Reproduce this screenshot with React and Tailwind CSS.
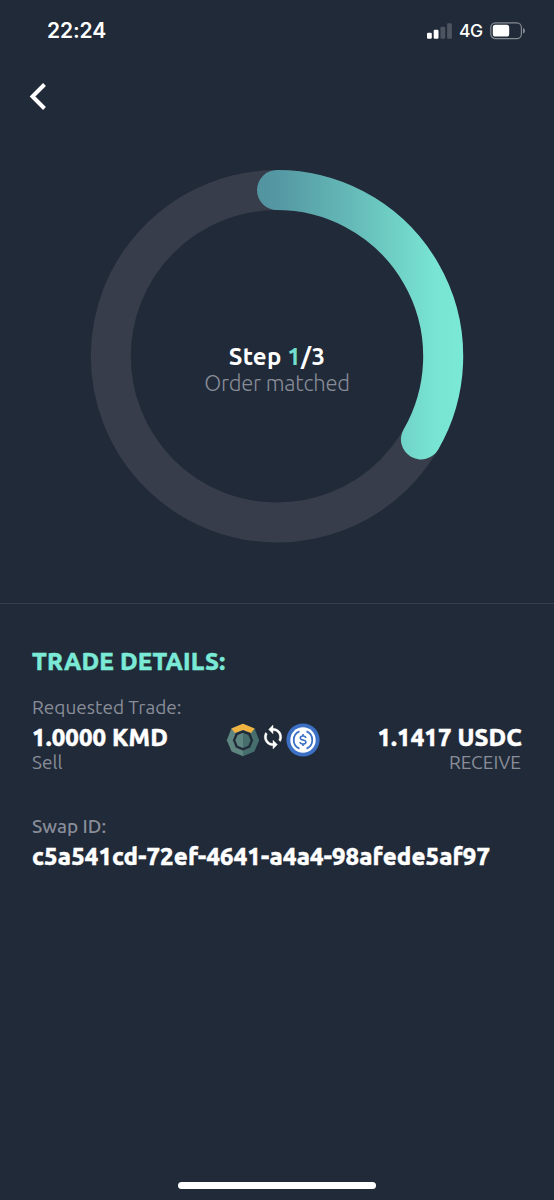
import React from "react";

const font = "font-['Ubuntu','Noto_Sans',sans-serif]";

function StatusBar() {
  return (
    <div className="flex h-[60px] items-center justify-between pl-[47px] pr-[28px] pt-[1px] font-['Inter',sans-serif] text-white">
      <span className="whitespace-nowrap text-[21px] font-semibold leading-[24px] tracking-[-0.1px]">22:24</span>
      <div className="flex items-center">
        <svg width="25" height="16" viewBox="0 0 25 16" className="mr-[7px]">
          <rect x="0" y="9.7" width="4.8" height="6" rx="1.2" fill="#fff" />
          <rect x="6.7" y="6.8" width="4.8" height="8.9" rx="1.2" fill="#fff" />
          <rect x="13.4" y="3.7" width="4.8" height="12" rx="1.2" fill="#4c545f" />
          <rect x="20.1" y="0.3" width="4.8" height="15.4" rx="1.2" fill="#4c545f" />
        </svg>
        <span className="mr-[7px] w-[24px] whitespace-nowrap text-[17.500px] font-medium leading-[24px] tracking-[-0.500px]">4G</span>
        <svg width="36" height="18" viewBox="0 0 36 18">
          <rect x="0.8" y="0.8" width="30.6" height="15.8" rx="4.6" fill="none" stroke="#858b93" strokeWidth="1.2" />
          <rect x="2.8" y="2.8" width="16.4" height="11.8" rx="2.6" fill="#fff" />
          <path d="M33 6v5.6c1.4-.5 2-1.600 2-2.800s-.6-2.300-2-2.800z" fill="#858b93" />
        </svg>
      </div>
    </div>
  );
}

function StepRing() {
  return (
    <div className="grid h-[374px] w-[374px] place-items-center">
      <svg className="col-start-1 row-start-1" width="374" height="374" viewBox="0 0 374 374">
        <defs>
          <linearGradient id="progress" gradientUnits="userSpaceOnUse" x1="167" y1="0" x2="373" y2="0">
            <stop offset="0" stopColor="#5294a0" />
            <stop offset="0.1" stopColor="#5498a3" />
            <stop offset="0.5" stopColor="#67beba" />
            <stop offset="0.85" stopColor="#78e3d2" />
            <stop offset="1" stopColor="#7ae9d6" />
          </linearGradient>
        </defs>
        <circle cx="187" cy="187.300" r="166.200" fill="none" stroke="#373d4a" strokeWidth="40" />
        <path d="M187 21.100A166.200 166.200 0 0 1 330.930 270.400" fill="none" stroke="url(#progress)" strokeWidth="40" strokeLinecap="round" />
      </svg>
      <div className="col-start-1 row-start-1 flex flex-col items-center pt-[28px]">
        <div className="whitespace-nowrap text-[24px] font-bold leading-[26px] tracking-[0.200px] text-white">
          Step <span className="text-[#73e0cf]">1</span>/3
        </div>
        <div className="whitespace-nowrap text-[22px] font-light leading-[26px] tracking-[-0.250px] text-[#888d98]">Order matched</div>
      </div>
    </div>
  );
}

function KomodoIcon() {
  return (
    <svg width="34" height="34" viewBox="0 0 34 34">
      <path d="M17 .8 5.400 5.600.8 17.200l4.800 11.200L17 33.200z" fill="#5f8580" />
      <path d="M17 .8 28.600 5.600l4.600 11.600-4.800 11.200L17 33.200z" fill="#466e6c" />
      <path d="M5.400 5.600 17 .8l11.600 4.800-3.500 4.500L17 6.900l-8.100 3.200z" fill="#f1b340" />
      <path d="M17 7.200l7.200 2.900 2.900 7.200-2.900 7.200-7.200 2.900-7.200-2.900-2.900-7.200 2.900-7.200z" fill="#202a38" />
      <path d="M17 9.700l-5.400 2.200-2.200 5.400 2.200 5.400 5.400 2.200z" fill="#5f8580" />
      <path d="M17 9.700l5.400 2.200 2.200 5.400-2.200 5.400-5.400 2.200z" fill="#466e6c" />
    </svg>
  );
}

function SyncIcon() {
  return (
    <svg width="26" height="26" viewBox="0 0 24 24" fill="#fff" stroke="#fff" strokeWidth="0.400">
      <path d="M12 4V1L8 5l4 4V6c3.310 0 6 2.690 6 6 0 1.010-.25 1.970-.7 2.800l1.460 1.460C19.540 15.030 20 13.570 20 12c0-4.420-3.580-8-8-8zm0 14c-3.310 0-6-2.690-6-6 0-1.010.25-1.970.7-2.800L5.240 7.740C4.460 8.970 4 10.430 4 12c0 4.420 3.580 8 8 8v3l4-4-4-4v3z" />
    </svg>
  );
}

function UsdcIcon() {
  return (
    <svg width="34" height="34" viewBox="0 0 34 34" fill="none">
      <circle cx="17" cy="17" r="16.600" fill="#3b70c4" />
      <circle cx="17" cy="17" r="12.700" fill="#fff" />
      <g stroke="#3b70c4">
        <path d="M13.500 8.400a9.300 9.300 0 0 0 0 17.200M20.500 8.400a9.300 9.300 0 0 1 0 17.200" strokeWidth="1.800" />
        <path d="M19.800 15c-.2-1.400-1.200-2-2.800-2s-2.700.7-2.700 1.900c0 2.900 5.600 1.300 5.600 4.200 0 1.300-1.100 2-2.900 2-1.700 0-2.800-.7-3-2.100M17 11v2M17 21v2" strokeWidth="1.600" />
      </g>
    </svg>
  );
}

export default function App() {
  return (
    <div className={`flex h-[1200px] w-[554px] flex-col overflow-hidden bg-[#212a38] ${font}`}>
      <StatusBar />
      <div className="flex h-[109px] pl-[28px] pt-[22px]">
        <svg width="20" height="29" viewBox="0 0 20 29">
          <path d="M16.500 2.500 4.500 14.500l12 12" fill="none" stroke="#fff" strokeWidth="4" />
        </svg>
      </div>
      <div className="flex h-[435px] justify-center border-b border-[#353e4a]">
        <StepRing />
      </div>
      <div className="flex flex-1 flex-col px-[32px] pt-[42px]">
        <h2 className="whitespace-nowrap text-[24px] font-extrabold leading-[32px] tracking-[0.200px] text-[#7ae9d6] [-webkit-text-stroke:0.4px]">TRADE DETAILS:</h2>
        <div className="mt-[16px] whitespace-nowrap text-[19px] leading-[26px] text-[#888d98]">Requested Trade:</div>
        <div className="grid h-[56px] grid-cols-[186px_1fr_186px]">
          <div className="flex flex-col items-start pt-[4px]">
            <div className="whitespace-nowrap text-[24px] font-extrabold leading-[28px] tracking-[0.100px] text-white [-webkit-text-stroke:0.4px]">1.0000 KMD</div>
            <div className="-mt-px whitespace-nowrap text-[19px] leading-[22px] text-[#888d98]">Sell</div>
          </div>
          <div className="flex h-[36.500px] items-end pl-[8px]">
            <KomodoIcon />
            <div className="h-[34px] w-[26px] pt-[1px]"><SyncIcon /></div>
            <UsdcIcon />
          </div>
          <div className="flex flex-col items-end pt-[4px]">
            <div className="whitespace-nowrap text-[24px] font-extrabold leading-[28px] tracking-[0.100px] text-white [-webkit-text-stroke:0.4px]">1.1417 USDC</div>
            <div className="-mt-px mr-px whitespace-nowrap text-[19px] leading-[22px] text-[#888d98]">RECEIVE</div>
          </div>
        </div>
        <div className="mt-[37px] whitespace-nowrap text-[19px] font-medium leading-[26px] text-[#888d98]">Swap ID:</div>
        <div className="mt-[2px] whitespace-nowrap text-[24px] font-extrabold leading-[32px] tracking-[0.110px] text-white [-webkit-text-stroke:0.4px]">c5a541cd-72ef-4641-a4a4-98afede5af97</div>
      </div>
      <div className="flex h-[18px] justify-center">
        <div className="h-[7px] w-[198px] rounded-full bg-white" />
      </div>
    </div>
  );
}
